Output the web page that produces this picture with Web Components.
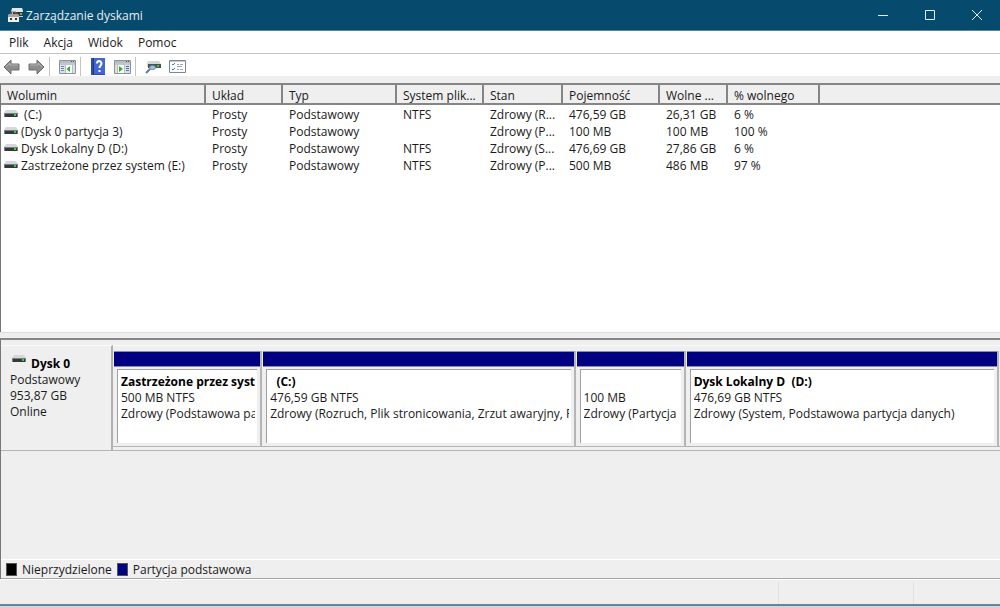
<!DOCTYPE html>
<html lang="pl">
<head>
<meta charset="utf-8">
<title>Zarządzanie dyskami</title>
<style>
html, body { margin: 0; height: 100%; }
body { font: 12px/16px "Open Sans", "Noto Sans", sans-serif; color: #1a1a1a; background: #efefef; overflow: hidden; }
</style>
</head>
<body>
<dm-window>
  <dm-titlebar slot="title">Zarządzanie dyskami</dm-titlebar>
  <dm-menubar slot="menu"></dm-menubar>
  <dm-toolbar slot="tools"></dm-toolbar>
  <dm-volumes slot="top"></dm-volumes>
  <dm-disk slot="bottom" name="Dysk 0" kind="Podstawowy" size="953,87 GB" state="Online">
    <dm-partition><span slot="name">Zastrzeżone przez syste</span><span slot="size">500 MB NTFS</span><span slot="state">Zdrowy (Podstawowa par</span></dm-partition>
    <dm-partition><span slot="name">&nbsp; (C:)</span><span slot="size">476,59 GB NTFS</span><span slot="state">Zdrowy (Rozruch, Plik stronicowania, Zrzut awaryjny, Po</span></dm-partition>
    <dm-partition><span slot="name">&nbsp;</span><span slot="size">100 MB</span><span slot="state">Zdrowy (Partycja s</span></dm-partition>
    <dm-partition><span slot="name">Dysk Lokalny D &nbsp;(D:)</span><span slot="size">476,69 GB NTFS</span><span slot="state">Zdrowy (System, Podstawowa partycja danych)</span></dm-partition>
  </dm-disk>
  <dm-legend slot="bottom"></dm-legend>
  <dm-statusbar slot="status"></dm-statusbar>
</dm-window>

<script>
const ICONS = {
  app: [17, 16, `<path d="M5 1h10l1 4v5H5z" fill="#c9cfce"/><path d="M5 1h10l1 4H4z" fill="#e4e7e6"/><path d="M6 5h10v4H6z" fill="#303535"/><path d="M13 6h2v2h-2z" fill="#48c850"/><path d="M1 8q0-1 2-1h7q2 0 2 1v7H1z" fill="#a8a3a0"/><path d="M1 10h11v5H1z" fill="#f0eeec"/><path d="M3 11h2v2H3zM8 11h2v2H8z" fill="#3c3835"/><path d="M4 7V5h5v2" fill="none" stroke="#77716e"/>`],
  back: [18, 16, `<path d="M1 8 8 1v4h8v6H8v4z" fill="#8d8d8d" stroke="#6e6e6e"/><path d="M3 8 7 4v2h8" fill="none" stroke="#b5b5b5"/>`],
  forward: [18, 16, `<path d="M17 8 10 1v4H2v6h8v4z" fill="#8d8d8d" stroke="#6e6e6e"/><path d="M3 6h8V4l4 4" fill="none" stroke="#b5b5b5"/>`],
  tree: [17, 14, `<path d="M.5.500h16v13H.5z" fill="#fafafa" stroke="#8c949b"/><path d="M1 1h15v2H1z" fill="#b4bdc4"/><path d="M12 1h1v1h-1zM14 1h1v1h-1z" fill="#46576a"/><path d="M1 4h15" stroke="#8c949b"/><path d="M1 5h5v8H1zM14 5h2v8h-2z" fill="#dde1e4"/><path d="M6.500 5v8M13.500 5v8" stroke="#b4bbc1"/><path d="M2 6.500h3M2 8.500h3M2 10.500h3" stroke="#5f8fc0"/><path d="M11 6v6L7.500 9z" fill="#36ad2c"/>`],
  help: [14, 17, `<path d="M0 0h14v17H0z" fill="#2d4dac"/><path d="M3 0h11v16H3z" fill="#4268cf"/><path d="M2.500 0v17" stroke="#1f368c"/><path d="M6 5.500Q6 3 8 3T10.500 5.500C10.500 7.500 8.500 7.500 8.500 10M8.500 12v2" fill="none" stroke="#fff" stroke-width="2"/>`],
  action: [17, 14, `<path d="M.5.500h16v13H.5z" fill="#fafafa" stroke="#8c949b"/><path d="M1 1h15v2H1z" fill="#b4bdc4"/><path d="M12 1h1v1h-1zM14 1h1v1h-1z" fill="#46576a"/><path d="M1 4h15" stroke="#8c949b"/><path d="M1 5h2v8H1zM11 5h5v8h-5z" fill="#dde1e4"/><path d="M3.500 5v8M10.500 5v8" stroke="#b4bbc1"/><path d="M12 6.500h3M12 8.500h3M12 10.500h3" stroke="#3f77bd"/><path d="M5 6v6l4-3z" fill="#36ad2c"/>`],
  scan: [16, 14, `<path d="M3 1h11l2 3v3H2V4z" fill="#d3d6d7"/><path d="M3 4h13v4H3z" fill="#4b5150"/><path d="M12 5h2v2h-2z" fill="#42c33b"/><path d="m1 13 4-4" stroke="#557b9c" stroke-width="2"/><ellipse cx="7.500" cy="7.500" rx="3" ry="2" fill="#9cc6e0" stroke="#6488a6"/>`],
  list: [17, 13, `<path d="M.5.500h16v12H.5z" fill="#fff" stroke="#7e878e"/><path d="M1 1h15v1H1z" fill="#c4cace"/><path d="m3 4 1 1 2-2M3 9l1 1 2-2" fill="none" stroke="#2f7fd6"/><path d="M8 4.500h2M11 4.500h3M8 6.500h5M8 9.500h2M11 9.500h3" stroke="#9ea8b0"/>`],
  drive: [14, 8, `<path d="M2 0h10l2 3H0z" fill="#d5d8da"/><path d="M0 3h14v4H0z" fill="#7b8182"/><path d="M1 4h12v3H1z" fill="#343a39"/><path d="M10 4h2v2h-2z" fill="#38d23c"/>`],
  min: [12, 12, `<path d="M1 6.500h10" stroke="#e4edf2"/>`],
  max: [12, 12, `<path d="M1.500 1.500h9v9h-9z" fill="none" stroke="#e4edf2"/>`],
  close: [12, 12, `<path d="m1 1 10 10M11 1 1 11" fill="none" stroke="#e4edf2"/>`]
};

function define(name, html, setup) {
  customElements.define(name, class extends HTMLElement {
    constructor() {
      super();
      this.attachShadow({ mode: "open" }).innerHTML = html;
    }
    connectedCallback() { if (setup) setup(this, this.shadowRoot); }
  });
}

define("dm-icon", `<style>:host{display:inline-block;flex:none;line-height:0} svg{display:block}</style><div></div>`, (el, root) => {
  const [w, h, body] = ICONS[el.getAttribute("name")];
  root.querySelector("div").innerHTML = `<svg width="${w}" height="${h}" viewBox="0 0 ${w} ${h}" aria-hidden="true">${body}</svg>`;
});

define("dm-window", `<style>
  :host{display:flex;flex-direction:column;height:100vh;background:#efefef}
  .top{flex:256 1 0;min-height:0;display:flex;flex-direction:column;margin-top:7px}
  .bottom{flex:239 1 0;min-height:0;display:flex;flex-direction:column;border-left:1px solid #777}
  .edge{height:2px;flex:none;background:#d6d3d0;border-top:2px solid #5f87a2}
</style>
<slot name="title"></slot><slot name="menu"></slot><slot name="tools"></slot>
<div class="top"><slot name="top"></slot></div>
<div class="bottom"><slot name="bottom"></slot></div>
<slot name="status"></slot><div class="edge"></div>`);

define("dm-titlebar", `<style>
  :host{display:flex;align-items:center;height:30px;flex:none;background:#064b6d;border-bottom:1px solid #5b879d;color:#e6eef2;padding-left:7px}
  .name{flex:1;padding:2px 0 0 2px}
  button{width:47px;height:30px;padding:0;border:0;background:none;display:grid;place-items:center}
</style>
<dm-icon name="app"></dm-icon><span class="name"><slot></slot></span>
<button aria-label="Minimalizuj"><dm-icon name="min"></dm-icon></button><button aria-label="Maksymalizuj"><dm-icon name="max"></dm-icon></button><button aria-label="Zamknij"><dm-icon name="close"></dm-icon></button>`);

define("dm-menubar", `<style>
  :host{display:flex;gap:15px;height:22px;flex:none;background:#fff;border-bottom:1px solid #c6c6c6;padding-left:9px}
  button{font:inherit;color:inherit;border:0;padding:2px 0 0;background:none}
</style><button>Plik</button><button>Akcja</button><button>Widok</button><button>Pomoc</button>`);

define("dm-toolbar", `<style>
  :host{display:flex;align-items:center;height:22px;flex:none;background:#fff;box-sizing:border-box;padding-top:3px}
  button{width:24px;height:19px;padding:0;border:0;background:none;display:grid;place-items:center}
  i{width:1px;height:19px;background:#c4c4c4;margin:0 5px 0 1px}
</style>
<button aria-label="Wstecz"><dm-icon name="back"></dm-icon></button><button aria-label="Dalej"><dm-icon name="forward"></dm-icon></button><i></i>
<button aria-label="Pokaż drzewo konsoli"><dm-icon name="tree"></dm-icon></button><i></i>
<button aria-label="Pomoc"><dm-icon name="help"></dm-icon></button><button aria-label="Pokaż okienko akcji"><dm-icon name="action"></dm-icon></button><i></i>
<button aria-label="Skanuj dyski"><dm-icon name="scan"></dm-icon></button><button aria-label="Właściwości"><dm-icon name="list"></dm-icon></button>`);

const VOLUMES = [
  ["\u00a0(C:)", "Prosty", "Podstawowy", "NTFS", "Zdrowy (R...", "476,59 GB", "26,31 GB", "6 %"],
  ["(Dysk 0 partycja 3)", "Prosty", "Podstawowy", "", "Zdrowy (P...", "100 MB", "100 MB", "100 %"],
  ["Dysk Lokalny D (D:)", "Prosty", "Podstawowy", "NTFS", "Zdrowy (S...", "476,69 GB", "27,86 GB", "6 %"],
  ["Zastrzeżone przez system (E:)", "Prosty", "Podstawowy", "NTFS", "Zdrowy (P...", "500 MB", "486 MB", "97 %"]
];
const COLUMNS = [["Wolumin", 205], ["Układ", 77], ["Typ", 114], ["System plik...", 87], ["Stan", 79], ["Pojemność", 97], ["Wolne ...", 68], ["% wolnego", 92]];

define("dm-volumes", `<style>
  :host{display:flex;flex-direction:column;flex:1;min-height:0}
  .pane{flex:1;min-height:0;overflow:hidden;background:#fff;border:1px solid #777;border-width:2px 0 0 1px;border-top-color:#858585}
  .split{height:5px;flex:none;background:#efefef;border-top:1px solid #ddd;border-bottom:2px solid #858585}
  table{width:100%;table-layout:fixed;border-collapse:separate;border-spacing:0}
  th,td{padding:0 0 0 6px;text-align:left;font-weight:400;white-space:nowrap}
  th{line-height:15px;padding-top:3px;background:#efefef;border-right:2px solid #858585;border-bottom:2px solid #858585}
  th:last-child{border-right:0}
  td{height:17px;line-height:17px}
  tbody tr:first-child td{padding-top:1px}
  td:first-child{padding-left:3px}
  .vol{display:flex;gap:3px}
  dm-icon{padding-top:4px}
</style><div class="pane"><table><colgroup></colgroup><thead><tr></tr></thead><tbody></tbody></table></div><div class="split"></div>`, (el, root) => {
  root.querySelector("colgroup").innerHTML = COLUMNS.map(c => `<col style="width:${c[1]}px">`).join("") + "<col>";
  root.querySelector("thead tr").innerHTML = COLUMNS.map(c => `<th>${c[0]}</th>`).join("") + "<th></th>";
  root.querySelector("tbody").innerHTML = VOLUMES.map(v => "<tr>" + v.map((t, i) => i ? `<td>${t}</td>` : `<td><div class="vol"><dm-icon name="drive"></dm-icon>${t}</div></td>`).join("") + "</tr>").join("");
});

define("dm-disk", `<style>
  :host{display:flex;margin-top:5px;flex:none;border-bottom:1px solid #b5b5b5}
  .info{width:101px;flex:none;padding:10px 0 0 9px;border-right:2px solid #b0b0b0;height:94px;border-top:1px solid #fafafa}
  .head{display:flex;gap:5px;padding-left:2px;font-weight:700;color:#000}
  dm-icon{margin-top:-1px}
  .map{flex:1;min-width:0;display:grid;grid-template-columns:149fr 313fr 110fr 313fr;padding-top:5px;padding-right:1px;border-top:1px solid #fafafa}
  .strip{flex:1;min-width:0;display:flex;flex-direction:column}
  .foot{height:3px;border-top:1px solid #b5b5b5}
</style>
<div class="info"><div class="head"><dm-icon name="drive"></dm-icon><span id="n"></span></div><div id="k"></div><div id="s"></div><div id="st"></div></div>
<div class="strip"><div class="map"><slot></slot></div><div class="foot"></div></div>`, (el, root) => {
  [["n", "name"], ["k", "kind"], ["s", "size"], ["st", "state"]].forEach(([id, a]) => root.getElementById(id).textContent = el.getAttribute(a));
});

define("dm-partition", `<style>
  :host{display:flex;flex-direction:column;min-width:0;border-right:2px solid #b5b5b5;padding-left:1px}
  .bar{height:14px;flex:none;background:#000080;border:1px solid #8b8b9b;border-width:1px 0}
  .box{flex:1;margin:2px 3px 3px;background:#fff;border:1px solid #a0a0a0;border-width:1px 0 0 1px;padding:4px 0 0 3px}
  .clip{margin-right:2px;overflow:hidden;white-space:pre}
  .name{font-weight:700;color:#000}
</style><div class="bar"></div><div class="box"><div class="clip name"><slot name="name"></slot></div><div class="clip"><slot name="size"></slot></div><div class="clip"><slot name="state"></slot></div></div>`);

define("dm-legend", `<style>
  :host{display:flex;align-items:center;gap:5px;height:18px;flex:none;margin-top:auto;padding-left:5px;border-top:1px solid #fff;border-bottom:1px solid #a5a5a5}
  i{width:9px;height:11px;border:1px solid #555;background:#000}
  i.primary{background:#000080}
  span{padding-top:2px}
</style><i></i><span>Nieprzydzielone</span><i class="primary"></i><span>Partycja podstawowa</span>`);

define("dm-statusbar", `<style>
  :host{display:flex;height:24px;flex:none;border-top:1px solid #fff}
  div{border-right:1px solid #e0e0e0;margin-top:2px}
  .wide{flex:1}.mid{width:134px}.end{width:86px;border:0}
</style><div class="wide"></div><div class="mid"></div><div class="end"></div>`);
</script>
</body>
</html>
